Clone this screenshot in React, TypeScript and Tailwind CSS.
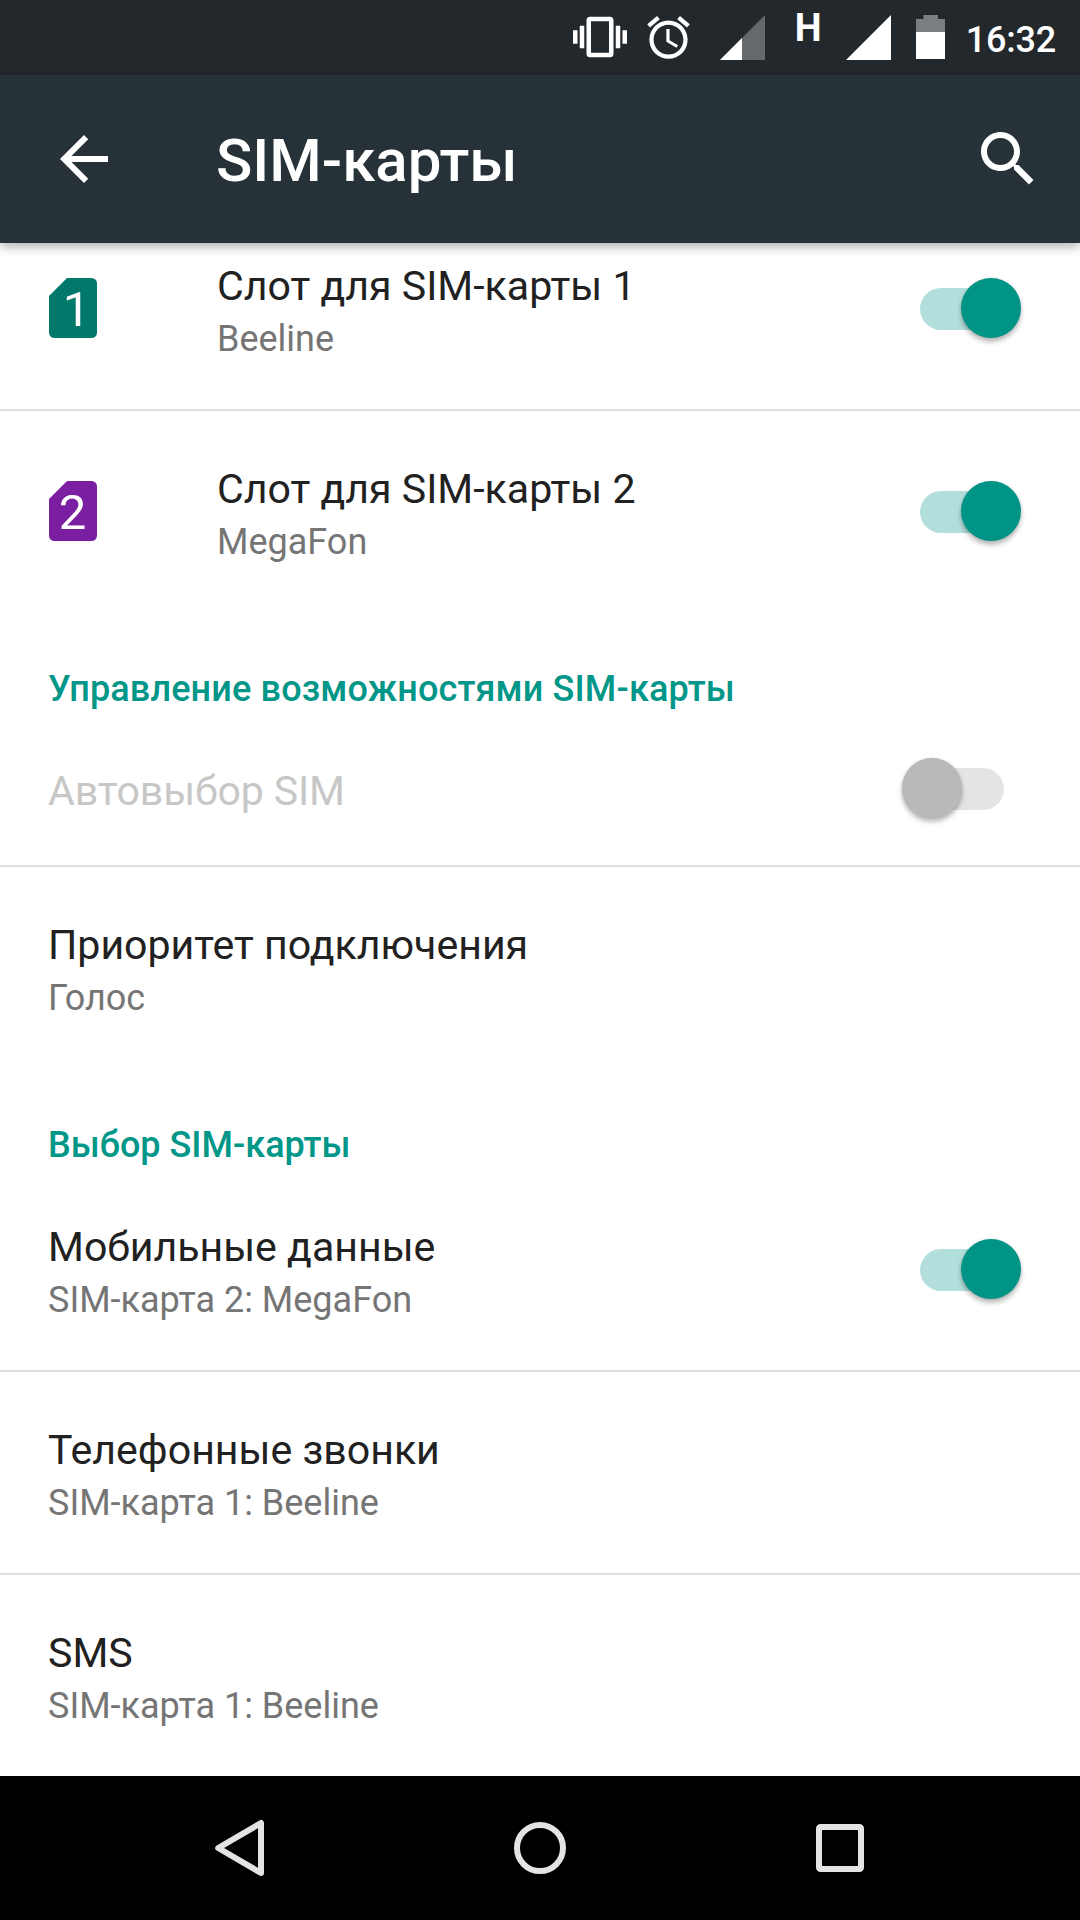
import type { ReactNode } from "react";
import clsx from "clsx";

interface SwitchProps {
  on: boolean;
  disabled?: boolean;
}

function Switch({ on, disabled }: SwitchProps) {
  return (
    <div
      className={clsx(
        "relative mr-[76px] h-[42px] w-[84px] shrink-0 rounded-full",
        disabled ? "bg-[#e4e4e4]" : "bg-[#b2dfdb]"
      )}
    >
      <div
        className={clsx(
          "absolute -top-[10px] size-[60px] rounded-full shadow-[0_4px_5px_rgba(0,0,0,0.26),0_0_3px_rgba(0,0,0,0.12)]",
          on ? "left-[41px]" : "-left-[18px]",
          disabled ? "bg-[#b9b9b9]" : "bg-[#009486]"
        )}
      />
    </div>
  );
}

interface SimIconProps {
  slot: number;
  className: string;
}

function SimIcon({ slot, className }: SimIconProps) {
  return (
    <svg viewBox="0 0 48 60" className={clsx("mb-[2px] h-[60px] w-12", className)}>
      <path
        d="M18 0H42.5A5.5 5.5 0 0 1 48 5.5V54.5A5.5 5.5 0 0 1 42.5 60H5.5A5.5 5.5 0 0 1 0 54.5V18Z"
        fill="currentColor"
      />
      <text x={slot === 1 ? 27.5 : 23.6} y="48" fontSize="49" textAnchor="middle" fill="#fff">
        {slot}
      </text>
    </svg>
  );
}

interface RowProps {
  title: string;
  summary?: string;
  icon?: ReactNode;
  toggle?: ReactNode;
  disabled?: boolean;
  divider?: boolean;
}

function Row({ title, summary, icon, toggle, disabled, divider }: RowProps) {
  return (
    <div
      className={clsx(
        "box-content flex items-center pl-12",
        summary ? "h-[201px]" : "h-[152px]",
        divider && "border-b-2 border-[#dedede]"
      )}
    >
      {icon && <div className="w-[169px] shrink-0 pl-px">{icon}</div>}
      <div className="grow self-start pt-[53px]">
        <div
          className={clsx(
            "text-[41.1px] leading-[50px]",
            disabled ? "tracking-[-0.15px] text-[#c7c7c7]" : "text-[#212121]"
          )}
        >
          {title}
        </div>
        {summary && (
          <div className="text-[36px] leading-[56px] text-[#757575]">{summary}</div>
        )}
      </div>
      {toggle}
    </div>
  );
}

function SectionTitle({ children, className }: { children: ReactNode; className?: string }) {
  return (
    <h2
      className={clsx(
        "h-[101px] pt-[53px] pl-12 text-[36px] leading-[48px] font-medium text-[#009688]",
        className
      )}
    >
      {children}
    </h2>
  );
}

function StatusBar() {
  return (
    <div className="flex h-[75px] shrink-0 items-start justify-end bg-[#23282c] pr-6 text-white">
      {/* vibrate */}
      <svg viewBox="0 0 24 24" className="mt-[10px] size-[54px] fill-white">
        <path d="M0 15h2V9H0v6zm3 2h2V7H3v10zm19-8v6h2V9h-2zm-3 8h2V7h-2v10zM16.5 3h-9C6.67 3 6 3.67 6 4.5v15c0 .83.67 1.5 1.5 1.5h9c.83 0 1.5-.67 1.5-1.5v-15c0-.83-.67-1.5-1.5-1.5zM16 19H8V5h8v14z" />
      </svg>
      {/* alarm */}
      <svg viewBox="0 0 24 24" className="mt-3 ml-4 size-[51px] fill-white">
        <path d="M22 5.72l-4.6-3.86-1.29 1.53 4.6 3.86L22 5.72zM7.88 3.39L6.6 1.86 2 5.71l1.29 1.53 4.59-3.85zM12.5 8H11v6l4.75 2.85.75-1.23-4-2.37V8zM12 4c-4.97 0-9 4.03-9 9s4.02 9 9 9c4.97 0 9-4.03 9-9s-4.03-9-9-9zm0 16c-3.87 0-7-3.13-7-7s3.13-7 7-7 7 3.13 7 7-3.13 7-7 7z" />
      </svg>
      {/* SIM 1 signal */}
      <svg viewBox="0 0 45 45" className="mt-[15px] ml-[26px] size-[45px]">
        <path d="M0 45L45 0V45Z" fill="#66696c" />
        <path d="M0 45L22 23V45Z" fill="#fff" />
      </svg>
      {/* SIM 2 signal */}
      <span className="mt-[5px] ml-[30px] w-[51px] text-[38px] leading-[46px] font-bold">H</span>
      <svg viewBox="0 0 45 45" className="mt-[15px] size-[45px] fill-white">
        <path d="M0 45L45 0V45Z" />
      </svg>
      {/* battery */}
      <svg viewBox="0 0 29 44" className="mt-[15px] ml-[25px] h-11 w-[29px]">
        <path d="M7.5 0H22V4H29V17H0V4H7.5Z" fill="#7b7e80" />
        <path d="M0 17H29V44H0Z" fill="#fff" />
      </svg>
      <span className="mt-[18px] ml-[21px] text-[36px] leading-[44px] font-medium tracking-[-0.2px]">
        16:32
      </span>
    </div>
  );
}

function NavBar() {
  return (
    <div className="flex h-36 shrink-0 items-center justify-center gap-[228px] bg-black">
      <svg viewBox="0 0 72 72" className="size-[72px] fill-none stroke-[#e4e4e4]">
        <path d="M57 11V61L14.2 36Z" strokeWidth="6" strokeLinejoin="round" />
      </svg>
      <svg viewBox="0 0 72 72" className="size-[72px] fill-none stroke-[#e4e4e4]">
        <circle cx="36" cy="36" r="23" strokeWidth="6" />
      </svg>
      <svg viewBox="0 0 72 72" className="size-[72px] fill-none stroke-[#e4e4e4]">
        <rect x="15" y="15" width="42" height="42" rx="1.5" strokeWidth="6" />
      </svg>
    </div>
  );
}

export default function App() {
  return (
    <div className="flex h-[1920px] w-[1080px] flex-col overflow-hidden bg-white font-[Roboto,sans-serif]">
      <StatusBar />

      <header className="relative z-10 flex h-[168px] shrink-0 items-center bg-[#273238] pr-9 pl-12 text-white shadow-[0_4px_10px_rgba(0,0,0,0.3)]">
        <svg viewBox="0 0 24 24" className="size-[72px] fill-white">
          <path d="M20 11H7.83l5.59-5.59L12 4l-8 8 8 8 1.41-1.41L7.83 13H20v-2z" />
        </svg>
        <h1 className="ml-24 grow pt-1 text-[60px] leading-[72px] font-medium">SIM-карты</h1>
        <svg viewBox="0 0 24 24" className="size-[72px] fill-white">
          <path d="M15.5 14h-.79l-.28-.27C15.41 12.59 16 11.11 16 9.5 16 5.91 13.09 3 9.5 3S3 5.91 3 9.5 5.91 16 9.5 16c1.61 0 3.09-.59 4.23-1.57l.27.28v.79l5 4.99L20.49 19l-4.99-5zm-6 0C7.01 14 5 11.99 5 9.5S7.01 5 9.5 5 14 7.01 14 9.5 11.99 14 9.5 14z" />
        </svg>
      </header>

      {/* the list is scrolled a little, so the first row starts under the header */}
      <main className="grow overflow-hidden">
        <div className="-mt-[35px]">
          <Row
            title="Слот для SIM-карты 1"
            summary="Beeline"
            icon={<SimIcon slot={1} className="text-[#00796b]" />}
            toggle={<Switch on />}
            divider
          />
          <Row
            title="Слот для SIM-карты 2"
            summary="MegaFon"
            icon={<SimIcon slot={2} className="text-[#7b1fa2]" />}
            toggle={<Switch on />}
          />

          <SectionTitle className="tracking-[0.15px]">
            Управление возможностями SIM-карты
          </SectionTitle>
          <Row title="Автовыбор SIM" toggle={<Switch on={false} disabled />} disabled divider />
          <Row title="Приоритет подключения" summary="Голос" />

          <SectionTitle>Выбор SIM-карты</SectionTitle>
          <Row
            title="Мобильные данные"
            summary="SIM-карта 2: MegaFon"
            toggle={<Switch on />}
            divider
          />
          <Row title="Телефонные звонки" summary="SIM-карта 1: Beeline" divider />
          <Row title="SMS" summary="SIM-карта 1: Beeline" />
        </div>
      </main>

      <NavBar />
    </div>
  );
}
